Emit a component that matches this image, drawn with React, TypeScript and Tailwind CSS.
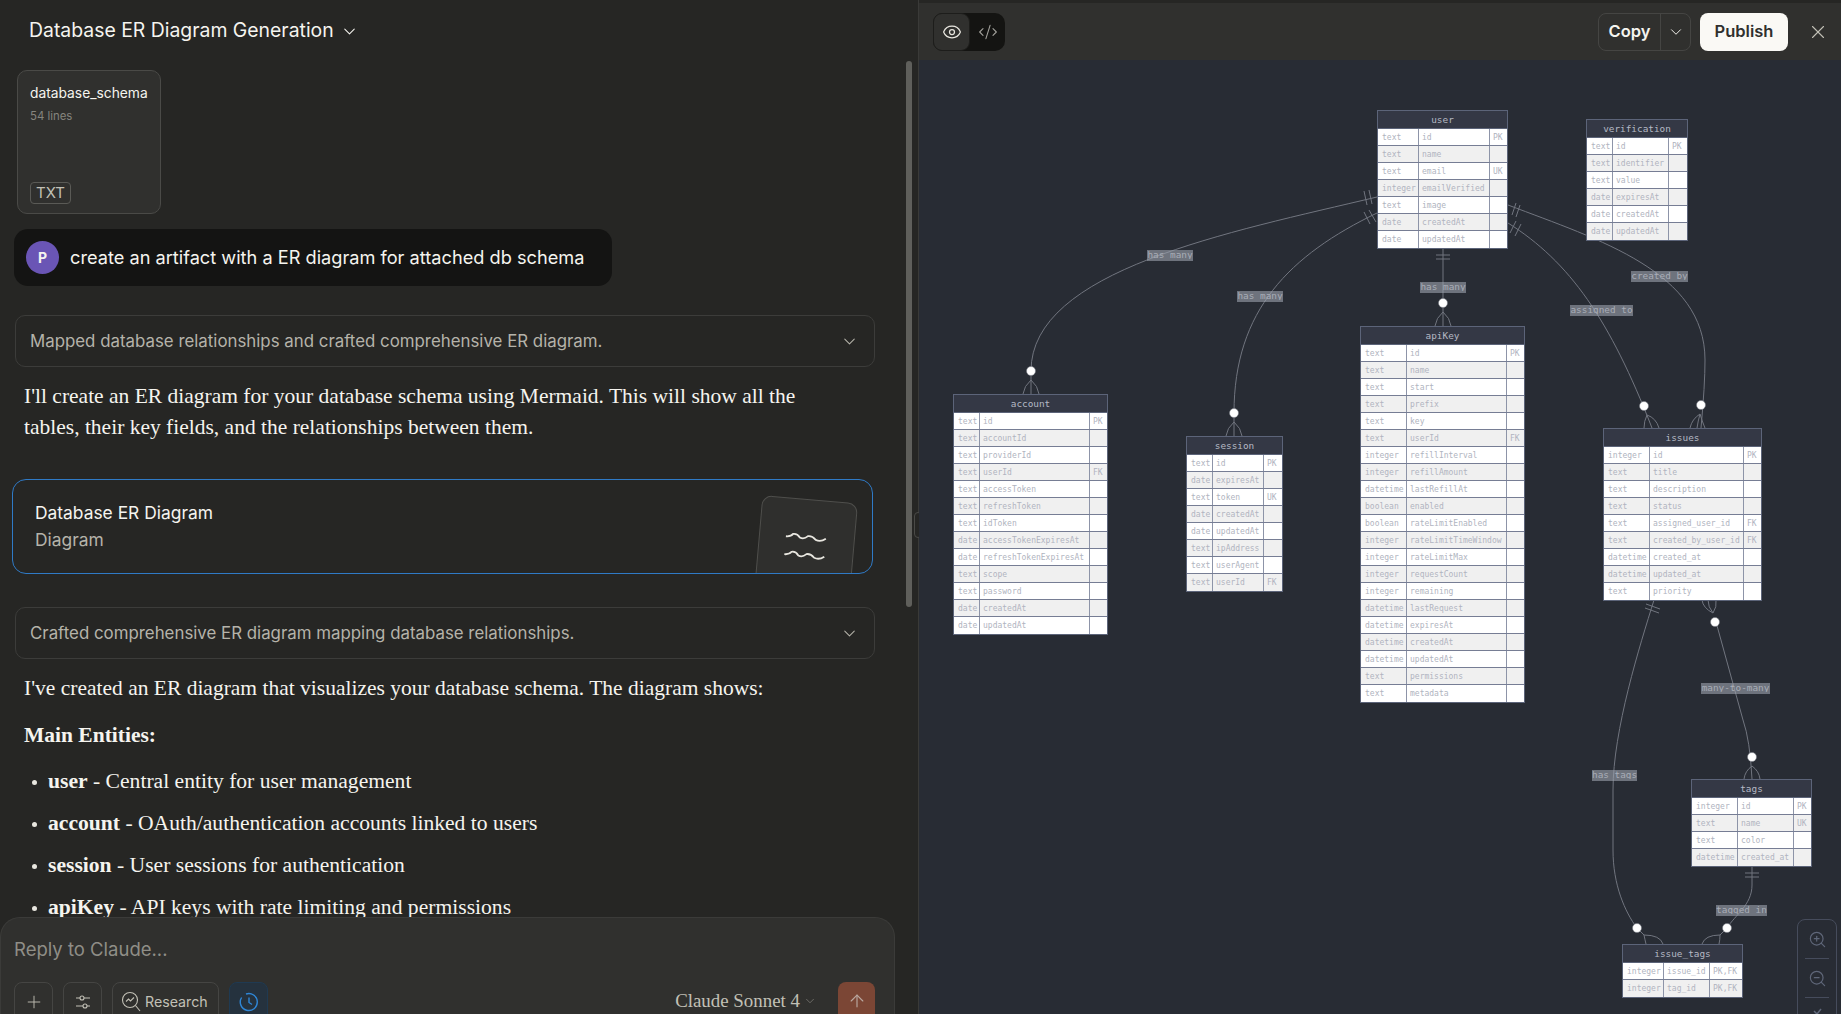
import { ChevronDown, CodeXml, Eye, Plus, X, ArrowUp, ZoomIn, ZoomOut } from 'lucide-react';

const OX = 919;
const OY = 60;

type Row = [string, string, string?];
type Table = { name: string; x: number; y: number; w: number; c1: number; c2: number; rows: Row[] };

const tables: Table[] = [
    { name: 'user', x: 1377, y: 110, w: 131, c1: 42, c2: 71, rows: [['text', 'id', 'PK'], ['text', 'name'], ['text', 'email', 'UK'], ['integer', 'emailVerified'], ['text', 'image'], ['date', 'createdAt'], ['date', 'updatedAt']] },
    { name: 'verification', x: 1586, y: 119, w: 102, c1: 27, c2: 56, rows: [['text', 'id', 'PK'], ['text', 'identifier'], ['text', 'value'], ['date', 'expiresAt'], ['date', 'createdAt'], ['date', 'updatedAt']] },
    { name: 'apiKey', x: 1360, y: 326, w: 165, c1: 47, c2: 100, rows: [['text', 'id', 'PK'], ['text', 'name'], ['text', 'start'], ['text', 'prefix'], ['text', 'key'], ['text', 'userId', 'FK'], ['integer', 'refillInterval'], ['integer', 'refillAmount'], ['datetime', 'lastRefillAt'], ['boolean', 'enabled'], ['boolean', 'rateLimitEnabled'], ['integer', 'rateLimitTimeWindow'], ['integer', 'rateLimitMax'], ['integer', 'requestCount'], ['integer', 'remaining'], ['datetime', 'lastRequest'], ['datetime', 'expiresAt'], ['datetime', 'createdAt'], ['datetime', 'updatedAt'], ['text', 'permissions'], ['text', 'metadata']] },
    { name: 'issues', x: 1603, y: 428, w: 159, c1: 47, c2: 94, rows: [['integer', 'id', 'PK'], ['text', 'title'], ['text', 'description'], ['text', 'status'], ['text', 'assigned_user_id', 'FK'], ['text', 'created_by_user_id', 'FK'], ['datetime', 'created_at'], ['datetime', 'updated_at'], ['text', 'priority']] },
    { name: 'account', x: 953, y: 394, w: 155, c1: 27, c2: 110, rows: [['text', 'id', 'PK'], ['text', 'accountId'], ['text', 'providerId'], ['text', 'userId', 'FK'], ['text', 'accessToken'], ['text', 'refreshToken'], ['text', 'idToken'], ['date', 'accessTokenExpiresAt'], ['date', 'refreshTokenExpiresAt'], ['text', 'scope'], ['text', 'password'], ['date', 'createdAt'], ['date', 'updatedAt']] },
    { name: 'session', x: 1186, y: 436, w: 97, c1: 27, c2: 51, rows: [['text', 'id', 'PK'], ['date', 'expiresAt'], ['text', 'token', 'UK'], ['date', 'createdAt'], ['date', 'updatedAt'], ['text', 'ipAddress'], ['text', 'userAgent'], ['text', 'userId', 'FK']] },
    { name: 'tags', x: 1691, y: 779, w: 121, c1: 47, c2: 56, rows: [['integer', 'id', 'PK'], ['text', 'name', 'UK'], ['text', 'color'], ['datetime', 'created_at']] },
    { name: 'issue_tags', x: 1622, y: 944, w: 121, c1: 42, c2: 46, rows: [['integer', 'issue_id', 'PK,FK'], ['integer', 'tag_id', 'PK,FK']] },
];

const labels = [
    { text: 'has_many', x: 1147, y: 250, w: 46 },
    { text: 'has_many', x: 1237, y: 291, w: 46 },
    { text: 'has_many', x: 1420, y: 282, w: 46 },
    { text: 'assigned_to', x: 1570, y: 305, w: 63 },
    { text: 'created_by', x: 1631, y: 271, w: 57 },
    { text: 'many-to-many', x: 1701, y: 683, w: 69 },
    { text: 'has_tags', x: 1592, y: 770, w: 45 },
    { text: 'tagged_in', x: 1716, y: 905, w: 51 },
];

const lines = [
    'M1377,197 C1230,232 1031,270 1031,371 L1031,394',
    'M1377,213 C1290,255 1234,310 1234,413 L1234,436',
    'M1443,248 L1443,326',
    'M1508,223 C1570,262 1610,320 1652,428',
    'M1508,205 C1600,240 1705,272 1705,360 Q1705,385 1701,428',
    'M1654,600 C1640,645 1613,730 1613,790 L1613,850 C1613,885 1625,912 1637,928 L1644,935',
    'M1716,622 L1743,720 Q1750,740 1752,779',
    'M1752,867 L1752,885 C1752,905 1735,915 1727,928 L1720,935',
];

const marks = [
    // double bars at "one" ends
    'M1364,191 L1367,205 M1369,190 L1372,204',
    'M1364,212 L1370,224 M1369,210 L1376,222',
    'M1436,255 L1450,255 M1436,259 L1450,259',
    'M1516,203 L1512,215 M1520,205 L1516,217',
    'M1516,221 L1510,233 M1521,224 L1515,236',
    'M1646,604 L1660,609 M1645,608 L1659,613',
    'M1745,873 L1759,873 M1745,877 L1759,877',
    // crow's feet
    'M1031,380 Q1024,386 1023,394 M1031,380 Q1038,386 1039,394',
    'M1234,422 Q1227,428 1226,436 M1234,422 Q1241,428 1242,436',
    'M1443,312 Q1436,318 1435,326 M1443,312 Q1450,318 1451,326',
    'M1647,415 Q1644,421 1644,428 M1647,415 Q1656,418 1659,428',
    'M1700,414 Q1692,419 1690,428 M1700,414 Q1702,421 1705,428 M1700,414 Q1698,421 1697,428',
    'M1713,613 Q1703,608 1702,600 M1713,613 Q1717,607 1716,600 M1713,613 Q1708,607 1708,600',
    'M1752,766 Q1745,771 1744,779 M1752,766 Q1759,771 1760,779',
    'M1644,935 Q1660,935 1663,944 M1644,935 Q1645,940 1646,944',
    'M1720,935 Q1705,935 1702,944 M1720,935 Q1720,940 1719,944',
];

const circles: [number, number][] = [[1031, 371], [1234, 413], [1443, 303], [1644, 406], [1701, 405], [1715, 622], [1752, 757], [1637, 928], [1727, 928]];

function ErTable({ t }: { t: Table }) {
    return (
        <div
            className="absolute border border-[#5c6479] bg-white font-['DejaVu_Sans_Mono',monospace]"
            style={{ left: t.x - OX, top: t.y - OY, width: t.w }}
        >
            <div className="h-[18px] border-b border-[#5c6479] bg-[#343845] text-center text-[9.4px] leading-[17px] text-[#b4b8c4]">
                {t.name}
            </div>
            {t.rows.map((r, i) => (
                <div
                    key={r[1]}
                    className={`flex h-[17px] text-[8px] leading-[17px] text-[#b0b4c0] ${i % 2 ? 'bg-[#f0f0f0]' : 'bg-white'} ${i < t.rows.length - 1 ? 'border-b border-[#767d94]' : ''}`}
                >
                    <div className="shrink-0 overflow-hidden border-r border-[#8d94a8] pl-[4px]" style={{ width: t.c1 - 1 }}>{r[0]}</div>
                    <div className="shrink-0 overflow-hidden whitespace-nowrap border-r border-[#8d94a8] pl-[3px]" style={{ width: t.c2 }}>{r[1]}</div>
                    <div className="flex-1 overflow-hidden whitespace-nowrap pl-[3px]">{r[2]}</div>
                </div>
            ))}
        </div>
    );
}

function Diagram() {
    return (
        <div className="relative flex-1 overflow-hidden bg-[#282c34]">
            <svg className="absolute left-0 top-0" width={922} height={954} viewBox={`${OX} ${OY} 922 954`} fill="none">
                {lines.map((d) => <path key={d} d={d} stroke="#71757f" strokeWidth="1" />)}
                {marks.map((d) => <path key={d} d={d} stroke="#71757f" strokeWidth="1" />)}
                {circles.map(([x, y]) => <circle key={x} cx={x} cy={y} r="4.5" fill="#fff" stroke="#71757f" strokeWidth="0.5" />)}
            </svg>
            {tables.map((t) => <ErTable key={t.name} t={t} />)}
            {labels.map((l) => (
                <div
                    key={l.text + l.x}
                    className="absolute h-[11px] bg-[#9ca3af]/60 text-center font-['DejaVu_Sans_Mono',monospace] text-[9.4px] leading-[10px] text-[#a9adb7]"
                    style={{ left: l.x - OX, top: l.y - OY, width: l.w }}
                >
                    <div className="h-[9px] overflow-hidden">{l.text}</div>
                </div>
            ))}
            {/* zoom controls */}
            <div className="absolute left-[878px] top-[859px] flex h-[120px] w-[40px] flex-col items-center rounded-t-[8px] border border-[#464c5c] pt-[10px] text-[#5f6779]">
                <ZoomIn size={19} strokeWidth={1.5} />
                <div className="mb-[10px] mt-[9px] h-px w-[24px] bg-[#464c5c]" />
                <ZoomOut size={19} strokeWidth={1.5} />
                <div className="mb-[10px] mt-[9px] h-px w-[24px] bg-[#464c5c]" />
                <svg width="16" height="16" viewBox="0 0 16 16" fill="none" stroke="#5f6779" strokeWidth="1.5">
                    <path d="M5 3 L8 6 L12 1" />
                </svg>
            </div>
        </div>
    );
}

function PanelHeader() {
    return (
        <div className="flex h-[57px] items-center bg-[#30302e] pl-[14px] pr-[12px]">
            <div className="flex h-[38px] w-[72px] rounded-[10px] bg-[#141412]">
                <div className="flex w-[37px] items-center justify-center rounded-[9px] border border-[#1d1d1b] bg-[#30302e] text-[#e8e6df]">
                    <Eye size={20} strokeWidth={1.5} />
                </div>
                <div className="flex w-[35px] items-center justify-center text-[#a3a29c]">
                    <CodeXml size={20} strokeWidth={1.3} />
                </div>
            </div>
            <div className="ml-auto flex h-[38px] w-[93px] rounded-[8px] border border-[#454543] text-[#f5f4ef]">
                <div className="flex w-[62px] items-center justify-center border-r border-[#454543] text-[16.5px] font-semibold">Copy</div>
                <div className="flex flex-1 items-center justify-center"><ChevronDown size={18} strokeWidth={1.3} /></div>
            </div>
            <div className="ml-[9px] flex h-[38px] w-[88px] items-center justify-center rounded-[8px] bg-[#faf9f5] text-[16.5px] font-semibold text-[#30302e]">
                Publish
            </div>
            <X className="ml-[19px] text-[#c2c0b6]" size={22} strokeWidth={1.2} />
        </div>
    );
}

function ThoughtBox({ text }: { text: string }) {
    return (
        <div className="ml-[15px] flex h-[52px] w-[860px] items-center justify-between rounded-[10px] border border-[#3c3c3a] pl-[14px] pr-[15px] text-[16.85px] text-[#b5b3aa]">
            <span className="pt-[1px]">{text}</span>
            <ChevronDown size={19} strokeWidth={1.3} />
        </div>
    );
}

function Composer() {
    return (
        <div className="h-[97px] w-[895px] overflow-hidden rounded-t-[20px] border border-b-0 border-[#3b3b39] bg-[#30302e] pl-[13px] pr-[19px]">
            <div className="pt-[21px] text-[18.5px] leading-[21px] text-[#8f8e87]">Reply to Claude...</div>
            <div className="mt-[22px] flex gap-[10px] text-[#c2c0b6]">
                <div className="flex h-[44px] w-[39px] items-center justify-center rounded-[8px] border border-[#454543] pb-[4px]"><Plus size={20} strokeWidth={1.1} /></div>
                <div className="flex h-[44px] w-[39px] items-center justify-center rounded-[8px] border border-[#454543] pb-[4px]">
                    <svg width="18" height="18" viewBox="0 0 18 18" fill="none" stroke="currentColor" strokeWidth="1.1">
                        <path d="M2 5 H6 M10 5 H16 M2 13 H9 M13 13 H16" />
                        <circle cx="8" cy="5" r="2" />
                        <circle cx="11" cy="13" r="2" />
                    </svg>
                </div>
                <div className="flex h-[44px] w-[107px] items-center gap-[4px] rounded-[8px] border border-[#454543] pb-[4px] pl-[8px] text-[14.2px] text-[#c2c0b6]">
                    <svg width="20" height="22" viewBox="0 0 20 22" fill="none" stroke="currentColor" strokeWidth="1.1">
                        <circle cx="9" cy="9" r="7.5" />
                        <path d="M14.5 14.5 L19 20" />
                        <path d="M5 10.5 L7.5 8 L9.5 10 L13 6.5" />
                    </svg>
                    Research
                </div>
                <div className="flex h-[44px] w-[39px] items-center justify-center rounded-[8px] border border-[#1f3a52] bg-[#25323e] pb-[4px] text-[#2f86d6]">
                    <svg width="20" height="20" viewBox="0 0 20 20" fill="none" stroke="currentColor" strokeWidth="1.4">
                        <path d="M7 2 A8.5 8.5 0 1 1 2.6 5.5" />
                        <path d="M10 5.5 V10.5 L13 12.5" />
                    </svg>
                </div>
                <div className="ml-auto flex h-[44px] items-start">
                    <div className="mt-[5px] flex items-center gap-[3px] font-['Liberation_Serif',serif] text-[18.9px] leading-[28px] text-[#c2c0b6]">
                        Claude Sonnet 4
                        <ChevronDown size={14} strokeWidth={1.2} className="text-[#85847e]" />
                    </div>
                    <div className="ml-[21px] flex h-[44px] w-[37px] items-center justify-center rounded-[8px] bg-[#7b4635] pb-[6px] text-[#b9a79f]">
                        <ArrowUp size={20} strokeWidth={1.4} />
                    </div>
                </div>
            </div>
        </div>
    );
}

function Bullet({ b, t }: { b: string; t: string }) {
    return (
        <div className="relative mb-[11px] h-[31px] pl-[48px] text-[21.6px] leading-[31px]">
            <span className="absolute left-[32px] top-[14px] h-[5px] w-[5px] rounded-full bg-[#e8e6df]" />
            <b className="font-bold">{b}</b> - {t}
        </div>
    );
}

export default function App() {
    return (
        <div className="flex h-[1014px] w-[1841px] overflow-hidden bg-[#262624] font-[Inter,sans-serif] text-[#f5f4ef]">
            <div className="relative flex w-[918px] flex-col">
                <div className="flex h-[60px] shrink-0 items-center gap-[6px] pl-[29px] pt-[2px] text-[19.4px]">
                    Database ER Diagram Generation
                    <ChevronDown size={19} strokeWidth={1.3} />
                </div>
                <div className="relative min-h-0 flex-1 overflow-hidden pt-[10px]">
                    <div className="ml-[17px] flex h-[144px] w-[144px] flex-col rounded-[10px] border border-[#4a4a47] bg-[#30302e] px-[12px] pb-[9px] pt-[13px]">
                        <div className="whitespace-nowrap text-[13.8px] leading-[18px]">database_schema</div>
                        <div className="mt-[6px] text-[11.4px] leading-[16px] text-[#85847e]">54 lines</div>
                        <div className="mt-auto w-fit rounded-[4px] border border-[#5a5a56] px-[5px] text-[15px] leading-[20px] text-[#c2c0b6]">TXT</div>
                    </div>
                    <div className="ml-[14px] mt-[15px] flex h-[57px] w-[598px] items-center rounded-[14px] bg-[#141413] pl-[12px]">
                        <div className="flex h-[33px] w-[33px] items-center justify-center rounded-full bg-[#6a55b5] text-[14px] font-bold">P</div>
                        <div className="ml-[11px] text-[18.2px]">create an artifact with a ER diagram for attached db schema</div>
                    </div>
                    <div className="mt-[29px]"><ThoughtBox text="Mapped database relationships and crafted comprehensive ER diagram." /></div>
                    <div className="ml-[24px] mt-[14px] w-[800px] font-['Liberation_Serif',serif] text-[21.5px] leading-[31px]">
                        I'll create an ER diagram for your database schema using Mermaid. This will show all the
                        tables, their key fields, and the relationships between them.
                    </div>
                    <div className="relative ml-[12px] mt-[36px] h-[95px] w-[861px] overflow-hidden rounded-[14px] border border-[#2f7ac6] pl-[22px] pt-[20px]">
                        <div className="text-[17.4px] leading-[26px]">Database ER Diagram</div>
                        <div className="mt-[1px] text-[17.4px] leading-[26px] text-[#b5b3aa]">Diagram</div>
                        <div className="absolute left-[744px] top-[19px] h-[120px] w-[96px] rotate-[5deg] rounded-[10px] border border-[#4f4f4c] bg-[#2f2f2d]">
                            <svg className="absolute left-[24px] top-[32px]" width="44" height="34" viewBox="0 0 44 34" fill="none" stroke="#e8e6df" strokeWidth="1.8">
                                <path d="M2 6 Q7 6 9 3 Q13 2 16 6 Q20 8 24 4 Q28 3 32 7 Q37 9 42 5" />
                                <path d="M2 24 Q7 24 9 21 Q13 20 16 24 Q20 26 24 22 Q28 21 32 25 Q37 27 42 23" />
                            </svg>
                        </div>
                    </div>
                    <div className="mt-[33px]"><ThoughtBox text="Crafted comprehensive ER diagram mapping database relationships." /></div>
                    <div className="ml-[24px] mt-[14px] font-['Liberation_Serif',serif]">
                        <div className="text-[21.5px] leading-[31px]">I've created an ER diagram that visualizes your database schema. The diagram shows:</div>
                        <div className="mt-[16px] text-[21.5px] font-bold leading-[31px]">Main Entities:</div>
                    </div>
                    <div className="mt-[15px] font-['Liberation_Serif',serif]">
                        <Bullet b="user" t="Central entity for user management" />
                        <Bullet b="account" t="OAuth/authentication accounts linked to users" />
                        <Bullet b="session" t="User sessions for authentication" />
                        <Bullet b="apiKey" t="API keys with rate limiting and permissions" />
                    </div>
                </div>
                <Composer />
                <div className="absolute left-[906px] top-[61px] h-[546px] w-[6px] rounded-full bg-[#5f5f5b]" />
                <div className="absolute left-[914px] top-[512px] h-[26px] w-[8px] rounded-[4px] border border-[#4a4a47] bg-[#262624]" />
            </div>
            <div className="flex flex-1 flex-col border-l border-[#3a3a38] pt-[3px]">
                <PanelHeader />
                <Diagram />
            </div>
        </div>
    );
}
